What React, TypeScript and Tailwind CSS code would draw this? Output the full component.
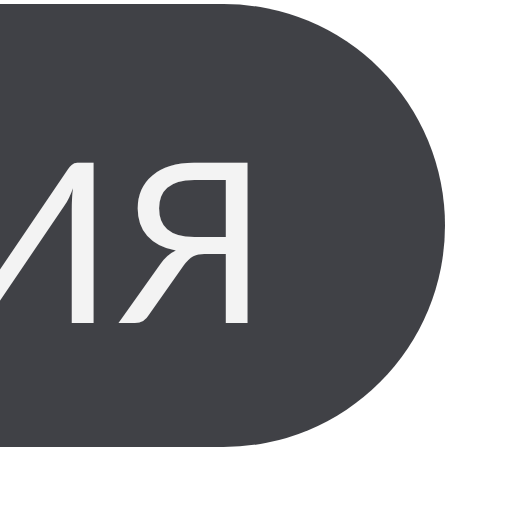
export default function App() {
  return (
    <div className="w-[512px] h-[512px] bg-white overflow-hidden pt-[4px]">
      <div className="ml-[-600px] w-[1045px] h-[443px] rounded-full bg-[#404146] flex items-center justify-end pr-[172px] pt-[22px]">
        <span
          className="text-[#f3f3f3] font-normal text-[224px] leading-none tracking-[5px] uppercase whitespace-nowrap"
          style={{ fontFamily: 'Lato, "Noto Sans", sans-serif' }}
        >
          Категория
        </span>
      </div>
    </div>
  );
}
